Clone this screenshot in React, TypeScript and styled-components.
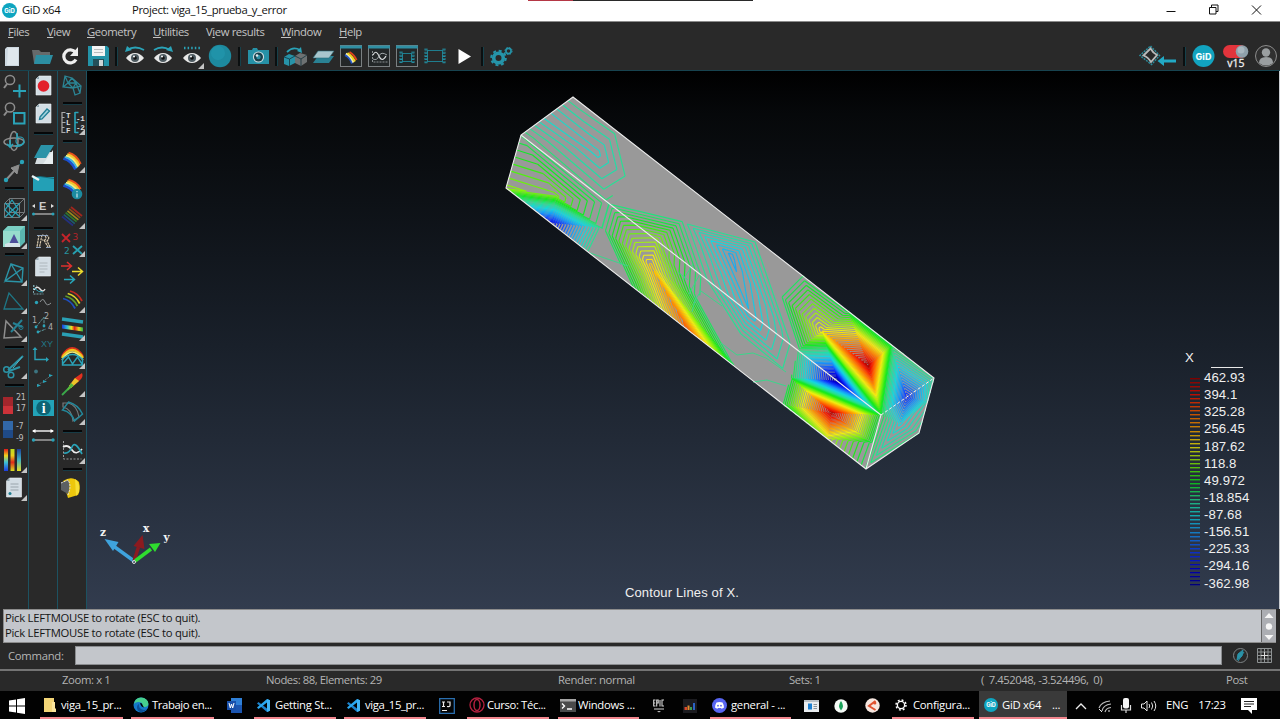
import React from "react";
import styled, { createGlobalStyle } from "styled-components";

const UI_FONT = '"Open Sans", "Noto Sans", sans-serif';
const TEAL = "#2aa3b8";
const GREY = "#8d8d8d";

const GlobalStyle = createGlobalStyle`
  body { margin: 0; background: #000; overflow: hidden; }
  * { box-sizing: border-box; }
  svg { display: block; flex: none; }
`;

/* ---------- layout ---------- */

const Desktop = styled.div`
  width: 1280px;
  height: 719px;
  display: flex;
  flex-direction: column;
  overflow: hidden;
  background: #292929;
  font-family: ${UI_FONT};
  font-size: 11.3px;
  line-height: 15px;
  letter-spacing: -0.28px;
`;

const TitleBar = styled.header`
  position: relative;
  height: 22px;
  flex: none;
  display: flex;
  align-items: center;
  background: #fff;
  color: #111;
  border-bottom: 1px solid #8b8b8b;
  padding-left: 2px;
  letter-spacing: -0.4px;
`;

const TopStrip = styled.i`
  position: absolute;
  top: 0;
  left: 528px;
  width: 225px;
  height: 1px;
  background: linear-gradient(90deg, #b53745 45px, #2a2a2a 45px);
`;

const Label = styled.span<{ $w?: number; $pl?: number; $ls?: number }>`
  white-space: pre;
  flex: none;
  margin-top: -2px;
  padding-left: ${(p) => p.$pl ?? 0}px;
  width: ${(p) => (p.$w ? p.$w + "px" : "auto")};
  letter-spacing: ${(p) => (p.$ls === undefined ? "inherit" : p.$ls + "px")};
`;

const WindowButtons = styled.div`
  margin-left: auto;
  display: flex;
  margin-right: 2px;
  margin-top: -3px;
`;

const MenuBar = styled.nav`
  height: 20px;
  flex: none;
  display: flex;
  align-items: center;
  padding-left: 8px;
  color: #c4c4c4;
  letter-spacing: -0.4px;
`;

const Toolbar = styled.div`
  height: 29px;
  flex: none;
  display: flex;
  border-bottom: 1px solid #17434f;
`;

const ToolSep = styled.i<{ $w: number }>`
  width: ${(p) => p.$w}px;
  display: flex;
  justify-content: center;
  align-items: center;
  &::before {
    content: "";
    width: 2px;
    height: 19px;
    background: #0b0f10;
    border-right: 1px solid #16414b;
  }
`;

const ToolGroupRight = styled.div`
  margin-left: auto;
  display: flex;
`;

const Workspace = styled.main`
  height: 538px;
  flex: none;
  display: flex;
`;

const ToolColumn = styled.div`
  width: 29px;
  flex: none;
  display: flex;
  flex-direction: column;
  border-right: 1px solid #1d5261;
`;

const ColumnSep = styled.i<{ $h: number }>`
  height: ${(p) => p.$h}px;
  display: flex;
  justify-content: center;
  align-items: center;
  &::before {
    content: "";
    width: 19px;
    height: 2px;
    background: #060708;
    border-bottom: 1px solid #173b45;
  }
`;

const Viewport = styled.section`
  position: relative;
  flex: 1;
  background: linear-gradient(#000 0%, #06080a 8%, #19202a 51%, #323c4e 100%);
  border-right: 1px solid #c9ccd0;
`;

const Legend = styled.div`
  position: absolute;
  left: 1098px;
  top: 278px;
  width: 90px;
  display: flex;
  flex-direction: column;
  color: #f0f0f0;
  font: 13.2px/17.12px "Liberation Sans", Arial, sans-serif;
  letter-spacing: 0.1px;
`;

const LegendHead = styled.div`
  display: flex;
  height: 20px;
  justify-content: space-between;
  align-items: flex-start;
  padding-right: 32px;
  &::after {
    content: "";
    width: 32px;
    height: 1px;
    background: #e8e8e8;
    margin-top: 18px;
  }
`;

const LegendBody = styled.div`
  display: flex;
  padding-left: 5px;
  gap: 4px;
`;

const LegendValues = styled.div`
  display: flex;
  flex-direction: column;
`;

const ResultCaption = styled.div`
  position: absolute;
  left: 0;
  right: 0;
  top: 513px;
  text-align: center;
  padding-right: 2px;
  color: #f0f0f0;
  font: 13px/17px "Liberation Sans", Arial, sans-serif;
  letter-spacing: 0.15px;
`;

const Messages = styled.div`
  height: 34px;
  flex: none;
  margin: 0 4px 0 3px;
  display: flex;
  background: #c3c6cb;
  border: 1px solid #8c8c8c;
  border-right: 0;
  color: #151515;
`;

const MessageText = styled.div`
  flex: 1;
  padding-left: 1px;
  display: flex;
  flex-direction: column;
`;

const MessageLine = styled.span`
  white-space: pre;
`;

const ScrollTrack = styled.div`
  width: 15px;
  background: #acaeb3;
  border-left: 1px solid #666;
`;

const CommandRow = styled.div`
  height: 26px;
  flex: none;
  display: flex;
  align-items: center;
  padding: 0 6px 0 8px;
  color: #b6b6b6;
`;

const CommandInput = styled.div`
  width: 1147px;
  height: 19px;
  background: #c3c6cb;
  border: 1px solid #8a8c8f;
  margin: -1px 9px 0 0;
`;

const StatusBar = styled.footer`
  height: 22px;
  flex: none;
  display: flex;
  align-items: center;
  border-top: 2px solid #747474;
  color: #b4b4b4;
  padding-left: 62px;
  padding-bottom: 1px;
  letter-spacing: -0.38px;
`;

const Taskbar = styled.div`
  height: 28px;
  flex: none;
  display: flex;
  background: #020202;
  color: #fff;
`;

const TaskSlot = styled.div<{ $w: number; $ml?: number }>`
  width: ${(p) => p.$w}px;
  margin-left: ${(p) => p.$ml ?? 0}px;
  display: flex;
  align-items: center;
  justify-content: center;
  padding-top: 1px;
`;

const Task = styled.div<{ $w: number; $ml?: number; $active?: boolean; $gap?: number }>`
  width: ${(p) => p.$w}px;
  margin-left: ${(p) => p.$ml ?? 8}px;
  display: flex;
  align-items: center;
  gap: ${(p) => p.$gap ?? 4}px;
  padding-left: ${(p) => (p.$active ? 5 : 2)}px;
  border-bottom: 2px solid #f2868e;
  padding-top: 2px;
  background: ${(p) => (p.$active ? "#3a3a3a" : "transparent")};
`;

/* ---------- icon helpers ---------- */

type IconProps = { w?: number; h?: number; corner?: boolean; children: React.ReactNode };

const Icon = ({ w = 28, h = 28, corner, children }: IconProps) => (
  <svg width={w} height={h} viewBox={`0 0 ${w} ${h}`} fill="none">
    {children}
    {corner && <path d="M27 21v6h-6z" fill="#c4c4c4" />}
  </svg>
);

const Sheet = ({ children, x = 7, y = 5 }: { children?: React.ReactNode; x?: number; y?: number }) => (
  <g transform={`translate(${x} ${y})`}>
    <path d="M3 0h12v19H0V3z" fill="#d3dde4" stroke="#eef3f6" strokeWidth=".6" />
    <path d="M0 3h3V0z" fill="#8fa3ae" />
    {children}
  </g>
);

const Eye = () => (
  <g>
    <path d="M5 16q4-5 9-5t9 5q-4 5-9 5t-9-5z" fill="#e8e8e8" />
    <circle cx="14" cy="16" r="4" fill="#4d5a60" />
    <circle cx="14" cy="16" r="1.8" fill="#111" />
    <circle cx="13" cy="14.6" r="1" fill="#fff" />
  </g>
);

const GidLogo = ({ size, font }: { size: number; font: number }) => (
  <svg width={size} height={size} viewBox={`0 0 ${size} ${size}`}>
    <circle cx={size / 2} cy={size / 2} r={size / 2} fill="#0ea5c0" />
    <text
      x={size / 2}
      y={size / 2 + font * 0.36}
      textAnchor="middle"
      fontFamily="Inter, sans-serif"
      fontWeight="800"
      fontSize={font}
      letterSpacing="0"
      fill="#f2fbfd"
    >
      GiD
    </text>
  </svg>
);

const FrameDots = ({ x, y, w, h }: { x: number; y: number; w: number; h: number }) => (
  <g>
    <rect x={x} y={y} width={w} height={h} stroke="#1f7d8e" />
    <path d={`M${x - 1.5} ${y - 2}v${h + 4}M${x + w + 1.5} ${y - 2}v${h + 4}`} strokeWidth="3" strokeDasharray="2 1.2" stroke="#2590a3" />
    <path d={`M${x - 1.5} ${y - 2}v${h + 4}M${x + w + 1.5} ${y - 2}v${h + 4}`} strokeWidth="1" stroke="#202b2e" strokeDasharray="1 2.2" />
  </g>
);

const WindowFrame = ({ children }: { children: React.ReactNode }) => (
  <g>
    <rect x="3.5" y="3.5" width="21" height="21" fill="#232728" stroke="#7b8082" />
    <path d="M3 5h22" stroke="#2f8fa3" strokeWidth="3" />
    {children}
  </g>
);

/* ---------- top toolbar ---------- */

const MainTools = () => (
  <Toolbar>
    <Icon w={27}>
      <path d="M7 5h12v19H5V7z" fill="#cdd8e0" />
      <path d="M8 6h10v17H7z" fill="#dfe7ec" />
    </Icon>
    <Icon>
      <path d="M5 8h7l2 2h9v11H7z" fill="#666a6b" />
      <path d="M9 13h17l-3 9H7z" fill="#2c8ea2" />
    </Icon>
    <Icon w={29}>
      <path d="M21 17.5a6.5 6.5 0 1 1-.5-7" stroke="#eee" strokeWidth="3.2" />
      <path d="M23 5v9h-8z" fill="#eee" />
    </Icon>
    <Icon>
      <path d="M4 4h19l2 2v18H4z" fill="#2493a8" />
      <path d="M8 4h13v10H8z" fill="#f4f4f4" />
      <path d="M10 7.500h9M10 10.500h9" stroke="#b9bdbe" />
      <path d="M9 17h11v7H9z" fill="#24505a" />
      <path d="M15 18h4v6h-4z" fill="#cfd4d6" />
    </Icon>
    <ToolSep $w={9} />
    <Icon>
      <Eye />
      <path d="M6 8q8-5 17 0" stroke={TEAL} strokeWidth="1.8" />
      <path d="M4 10l2-6 5 4z" fill={TEAL} />
    </Icon>
    <Icon>
      <Eye />
      <path d="M5 8q8-5 16 0" stroke={TEAL} strokeWidth="1.800" />
      <path d="M24 10l-2-6-5 4z" fill={TEAL} />
    </Icon>
    <Icon w={29} corner>
      <g transform="translate(1 0)">
        <Eye />
        <path d="M6 6h17" stroke={TEAL} strokeWidth="2.500" strokeDasharray="1.500 2.100" />
      </g>
    </Icon>
    <Icon>
      <circle cx="14" cy="14" r="11.200" fill="#1d8a9f" />
      <circle cx="12" cy="11" r="7" fill="#239ab0" opacity=".6" />
    </Icon>
    <ToolSep $w={10} />
    <Icon>
      <path d="M4 8h4l1-2h4l1 2h11v14H4z" fill="#2691a6" />
      <circle cx="14.500" cy="15" r="5.600" fill="#cfdde1" />
      <circle cx="14.500" cy="15" r="4.500" fill="#19414b" />
      <circle cx="14.500" cy="15" r="2.200" fill="#2f8fa3" />
      <circle cx="13" cy="13.500" r="1.300" fill="#dfe7ea" />
    </Icon>
    <ToolSep $w={9} />
    <Icon>
      <path d="M3 15l5-3 6 2v7l-6 3-5-2z" fill="#2793a8" />
      <path d="M14 14l5-3 7 2v7l-6 4-6-3z" fill="#6d7172" />
      <path d="M3 15l5.500 2 5.500-3M8.500 17v7M14 14l6 3 6-4M20 17v7" stroke="#14343c" strokeWidth=".8" />
      <path d="M6 10q6-6 13-2" stroke={TEAL} strokeWidth="1.800" />
      <path d="M21 11l-1-6-4 4z" fill={TEAL} />
    </Icon>
    <Icon>
      <path d="M9 14h16l-5 7H4z" fill="#2a8193" />
      <path d="M9 9h16l-5 7H4z" fill="#a9c6cd" stroke="#2b6d7a" strokeWidth=".6" />
    </Icon>
    <Icon>
      <WindowFrame>
        <g strokeWidth="2">
          <path d="M8 13q5 2 7 8.500" stroke="#2456c8" />
          <path d="M9 11.500q5 3 7.500 9" stroke="#f4efb0" />
          <path d="M10.500 11q5 3 7.500 8.500" stroke="#f2d51c" />
          <path d="M12.500 10q5 3 7 8" stroke="#e0431c" />
        </g>
      </WindowFrame>
    </Icon>
    <Icon>
      <WindowFrame>
        <path d="M7.500 9v11h15" stroke="#8b9092" strokeDasharray="2 1" />
        <path d="M8 13q3-6 6 1t7 0" stroke="#d9dcdd" strokeWidth="1.200" />
        <path d="M8 17q4 2 6-3t8-1" stroke="#9fa5a7" />
      </WindowFrame>
    </Icon>
    <Icon>
      <WindowFrame>
        <FrameDots x={9.5} y={11.5} w={9} h={8} />
      </WindowFrame>
    </Icon>
    <Icon w={29}>
      <FrameDots x={6.5} y={8.500} w={15} h={11} />
    </Icon>
    <Icon>
      <path d="M8.500 7l12.500 7.500L8.500 22z" fill="#fff" />
    </Icon>
    <ToolSep $w={9} />
    <Icon>
      <circle cx="11.500" cy="16" r="4.800" stroke="#2594a9" strokeWidth="3.600" />
      <circle cx="11.500" cy="16" r="7.300" stroke="#2594a9" strokeWidth="2" strokeDasharray="3 2.730" />
      <circle cx="21.500" cy="9" r="2.600" stroke="#2594a9" strokeWidth="1.600" />
      <circle cx="21.500" cy="9" r="3.600" stroke="#2594a9" strokeWidth="1" strokeDasharray="1.500 1.330" />
    </Icon>
    <ToolGroupRight>
      <Icon w={38}>
        <path d="M11.500 4l9 9.500-8 9-11.500-9z" stroke="#2b8b9c" strokeWidth="1.500" strokeDasharray="2 1" />
        <path d="M4.500 13.500l7-7q2.500 4.500 6.500 6.500l-6 7q-3-5-7.500-6.500z" stroke="#b9bbbb" strokeWidth="1.800" />
        <path d="M23 19h14" stroke="#22a9c4" strokeWidth="3" />
        <path d="M18.500 19l6.500-5v10z" fill="#22a9c4" />
      </Icon>
      <ToolSep $w={15} />
      <Icon w={23}>
        <circle cx="11.500" cy="14" r="11" fill="#12a3bf" />
        <text x="11.500" y="17.500" textAnchor="middle" fontFamily="Inter, sans-serif" fontWeight="800" fontSize="9" letterSpacing="0" fill="#eefbfd">GiD</text>
      </Icon>
      <Icon w={37}>
        <rect x="8" y="3" width="24" height="13" rx="6.500" fill="#e2343c" />
        <circle cx="27" cy="9.500" r="6.300" fill="#8fa0aa" />
        <circle cx="26" cy="8" r="3.500" fill="#a9b7bf" />
        <text x="21" y="25" textAnchor="middle" fontFamily="Open Sans, sans-serif" fontSize="10.500" letterSpacing="0" fill="#f0f0f0" stroke="#f0f0f0" strokeWidth=".3">v15</text>
      </Icon>
      <Icon>
        <circle cx="14" cy="14" r="10.500" fill="#303030" stroke="#8b8b8b" />
        <circle cx="14" cy="10.500" r="4.200" fill="#9a9ea0" />
        <path d="M7 21q0-6 7-6t7 6q-7 5-14 0z" fill="#9a9ea0" />
      </Icon>
    </ToolGroupRight>
  </Toolbar>
);

/* ---------- side columns ---------- */

const ColumnOne = () => (
  <ToolColumn>
    <Icon>
      <circle cx="10" cy="9" r="4.600" stroke={GREY} strokeWidth="1.500" />
      <path d="M7 13l-3 4" stroke={GREY} strokeWidth="2" />
      <path d="M19.500 13.500v13M13 20h13" stroke={TEAL} strokeWidth="2" />
    </Icon>
    <Icon>
      <circle cx="10" cy="8.500" r="4.600" stroke={GREY} strokeWidth="1.500" />
      <path d="M7 12.500l-3 4" stroke={GREY} strokeWidth="2" />
      <rect x="14" y="14" width="10.500" height="10.500" stroke={TEAL} strokeWidth="2" />
    </Icon>
    <Icon>
      <ellipse cx="14" cy="14" rx="4" ry="9.500" stroke={GREY} strokeWidth="1.500" />
      <ellipse cx="14" cy="15" rx="10" ry="4" stroke={GREY} strokeWidth="1.500" />
      <path d="M10 13v6M7 17l3 3 3-3M24 15q-2 5-9 4M17 11v-5" stroke={TEAL} strokeWidth="1.600" />
      <circle cx="20" cy="14" r="4" stroke={TEAL} strokeWidth="1.200" />
    </Icon>
    <Icon>
      <path d="M6 25l9-10" stroke={GREY} strokeWidth="2" />
      <path d="M19 10l-8 3 6 6z" fill={GREY} stroke={GREY} strokeWidth="1" />
      <path d="M19 10l3-3" stroke="#20616d" />
      <circle cx="6" cy="25" r="2.200" fill={TEAL} />
      <circle cx="22" cy="7" r="2.200" fill={TEAL} />
    </Icon>
    <ColumnSep $h={11} />
    <Icon corner>
      <path d="M9.500 4.500h15v14h-15zM4.500 9.500h15v14h-15zM4.500 9.500l5-5M19.500 9.500l5-5M4.500 23.500l5-5M19.500 23.500l5-5" stroke="#75797b" />
      <path d="M5 9l15 14M5 23l15-14M12 6l6 9-6 8-7-7z" stroke={TEAL} strokeWidth="1.200" />
    </Icon>
    <Icon corner>
      <path d="M3 9l5-5h17v16l-5 5H3z" fill="#5ab7b0" />
      <path d="M3 9h17v16H3z" fill="#97dccd" />
      <path d="M3 9l5-5h17l-5 5z" fill="#7bcfc3" />
      <path d="M5 22l9-3 6 3v3H5z" fill="#d5e3e8" />
      <path d="M14 12l4.500 9h-9z" fill="#4d4f9a" />
    </Icon>
    <ColumnSep $h={9} />
    <Icon corner>
      <path d="M11 5l12 4-1 14-17-1zM11 5l-6 17 18-13M11 5l11 18" stroke="#2b93a6" strokeWidth="1.400" />
    </Icon>
    <Icon corner>
      <path d="M9 6L4 22h19z" stroke="#1f7685" strokeWidth="1.300" />
    </Icon>
    <Icon corner>
      <path d="M6 6L4 23l17-1zM6 6l15 16" stroke={GREY} strokeWidth="1.500" />
      <path d="M11 17L22 5M22 12L13 8" stroke="#258194" strokeWidth="2" />
      <circle cx="21" cy="12.500" r="2" stroke="#258194" />
    </Icon>
    <ColumnSep $h={9} />
    <Icon corner>
      <path d="M23 4L8 18M20 15L9 19" stroke="#2b93a6" strokeWidth="2" />
      <path d="M22 5L13 16" stroke="#4fb5c6" />
      <circle cx="6.500" cy="17.500" r="2.800" stroke="#2b93a6" strokeWidth="1.500" />
      <circle cx="11" cy="23" r="2.800" stroke="#2b93a6" strokeWidth="1.500" />
    </Icon>
    <ColumnSep $h={10} />
    <Icon>
      <path d="M3 7h10v17H3z" fill="#a3262c" />
      <path d="M3 16h10v8H3z" fill="#cc3239" />
      <text x="16" y="9.500" fontSize="8" fill="#bcbcbc" fontFamily="DejaVu Sans">21</text>
      <text x="16" y="21" fontSize="8" fill="#bcbcbc" fontFamily="DejaVu Sans">17</text>
    </Icon>
    <Icon>
      <path d="M3 3h10v17H3z" fill="#1f4a87" />
      <path d="M3 3h10v9H3z" fill="#3268a8" />
      <text x="16" y="11" fontSize="8" fill="#bcbcbc" fontFamily="DejaVu Sans">-7</text>
      <text x="16" y="23" fontSize="8" fill="#bcbcbc" fontFamily="DejaVu Sans">-9</text>
    </Icon>
    <Icon corner>
      <defs>
        <linearGradient id="ra" x2="0" y2="1">
          <stop stopColor="#e0161a" /><stop offset=".3" stopColor="#f0d21c" /><stop offset=".6" stopColor="#3fc4d4" /><stop offset="1" stopColor="#1d3ae0" />
        </linearGradient>
        <linearGradient id="rb" x2="0" y2="1">
          <stop stopColor="#b9dc22" /><stop offset=".3" stopColor="#e8cf1d" /><stop offset=".6" stopColor="#e02a1a" /><stop offset="1" stopColor="#d8df20" />
        </linearGradient>
        <linearGradient id="rc" x2="0" y2="1">
          <stop stopColor="#1d3f9a" /><stop offset=".5" stopColor="#3fb4c4" /><stop offset="1" stopColor="#e8df20" />
        </linearGradient>
      </defs>
      <path d="M4 3h4v22H4z" fill="url(#ra)" />
      <path d="M10.500 3h4v22h-4z" fill="url(#rb)" />
      <path d="M17 3h4v22h-4z" fill="url(#rc)" />
    </Icon>
    <Icon corner>
      <Sheet x={6.500} y={4}>
        <path d="M4 6h8M4 9h8M4 12h8" stroke="#9aa5ac" />
        <circle cx="3.500" cy="15.500" r="1.500" fill="#1f7d90" />
      </Sheet>
    </Icon>
  </ToolColumn>
);

const ColumnTwo = () => (
  <ToolColumn>
    <Icon>
      <Sheet><circle cx="7.500" cy="10" r="5.800" fill="#e3202b" /></Sheet>
    </Icon>
    <Icon>
      <Sheet>
        <path d="M4 13L11 5l2.500 2L6 15l-2.500.5z" fill="#9fd0dc" stroke="#1f7d95" strokeWidth="1.300" />
      </Sheet>
    </Icon>
    <ColumnSep $h={13} />
    <Icon>
      <path d="M10 12h14v12H6z" fill="#d5dde0" />
      <path d="M12 5h13l-8 13H5z" fill="#2b93a8" />
      <path d="M24 10v14H14z" fill="#e8eef0" />
    </Icon>
    <Icon>
      <path d="M4 9h21v14H4z" fill="#23a0b6" />
      <path d="M4 9h7l14 2v-1L11 8z" fill="#176b7b" />
      <path d="M3 8l7 4" stroke="#e9f3f5" strokeWidth="2.500" />
    </Icon>
    <Icon>
      <text x="13.500" y="14" textAnchor="middle" fontSize="11" fontWeight="700" fill="#ccc" fontFamily="Liberation Sans">E</text>
      <path d="M3 10l3-2v4zM25 10l-3-2v4z" fill="#ddd" />
      <path d="M4 18h21" stroke={GREY} strokeWidth="1.800" />
      <circle cx="4.500" cy="18" r="1.500" fill={TEAL} />
      <circle cx="24" cy="18" r="1.500" fill={TEAL} />
    </Icon>
    <ColumnSep $h={8} />
    <Icon h={21}>
      <path d="M10 3l-2 12M13 3l-2.500 12M13 3q6 1 3 5h-3M15 8l4 7M17 3q5 2 1 6l3 6" stroke="#d8c9ae" strokeWidth="1.200" strokeDasharray="2.500 .6" />
      <path d="M8 3.500h11M7 15.500h5M17 15.500h5" stroke="#8fa3bd" />
    </Icon>
    <Icon>
      <Sheet x={6.500} y={4}>
        <path d="M4 6h8M4 9h8M4 12h8M4 15h5" stroke="#aeb7bc" />
      </Sheet>
    </Icon>
    <Icon>
      <path d="M4.500 4v9h10M4 5h4" stroke="#7aa4ad" strokeDasharray="2 1" />
      <path d="M5 9q3-5 6-1t5 0" stroke="#e0e0e0" strokeWidth="1.400" />
      <path d="M5 7q5 5 9 4" stroke={TEAL} />
      <circle cx="7.500" cy="21.500" r="1.700" fill={TEAL} />
      <path d="M11 21q3-5 5 0t6 1" stroke="#8f9496" />
    </Icon>
    <Icon>
      <text x="3" y="14" fontSize="8" fill="#a9adaf" fontFamily="DejaVu Sans">1</text>
      <text x="15" y="9.500" fontSize="8" fill="#a9adaf" fontFamily="DejaVu Sans">2</text>
      <text x="19" y="21" fontSize="8" fill="#a9adaf" fontFamily="DejaVu Sans">4</text>
      <path d="M7 18l8-10v9M9 23l8-3" stroke="#5f999f" strokeDasharray="3 1" />
      <circle cx="7" cy="18" r="1.400" fill={TEAL} />
      <circle cx="15" cy="17" r="1.400" fill={TEAL} />
      <circle cx="9" cy="23" r="1.400" fill={TEAL} />
    </Icon>
    <Icon>
      <text x="12" y="10" fontSize="9" fill="#217787" letterSpacing="0" fontFamily="Liberation Sans">XY</text>
      <path d="M6 12v10.500h11" stroke={TEAL} strokeWidth="1.400" />
      <path d="M17 20l3 2.500-3 2.500z" fill={TEAL} />
      <path d="M3.500 13l2.500-3 2.500 3z" fill={TEAL} />
    </Icon>
    <Icon>
      <circle cx="7" cy="6.500" r="1.900" fill="#3c7480" />
      <path d="M8 20l6-3M16 15l7-5" stroke="#5e686b" strokeDasharray="2 1" />
      <path d="M8 19l4 1.500-4 1.500zM14 15l4 1.500-4 1.500zM20 9l4 1.500-4 1.500z" fill={TEAL} />
    </Icon>
    <Icon h={29}>
      <path d="M4 7h21v16H4z" fill="#23a3b8" />
      <circle cx="14.500" cy="15" r="7.300" fill="#0d6475" />
      <text x="14.500" y="20" textAnchor="middle" fontSize="14" fontWeight="700" fill="#fff" fontFamily="Liberation Serif">i</text>
    </Icon>
    <Icon>
      <path d="M4 9h20" stroke="#eee" strokeWidth="1.500" />
      <path d="M3 9l3.500-2v4zM25 9l-3.500-2v4z" fill="#fff" />
      <path d="M4 18h21" stroke={GREY} strokeWidth="1.800" />
      <circle cx="4.500" cy="18" r="1.700" fill={TEAL} />
      <circle cx="24" cy="18" r="1.700" fill={TEAL} />
    </Icon>
  </ToolColumn>
);

const Arcs = ({ colors, d, w = 1.6, dx = -1.5, dy = 1.7 }: { colors: string[]; d: string; w?: number; dx?: number; dy?: number }) => (
  <g>
    {colors.map((c, i) => (
      <path key={c} d={d} stroke={c} strokeWidth={w} transform={`translate(${i * dx} ${i * dy})`} />
    ))}
  </g>
);

const RAINBOW = ["#e8501c", "#f5c82a", "#f4ee80", "#3fb6e0", "#1b4fd0"];

const ColumnThree = () => (
  <ToolColumn>
    <Icon>
      <path d="M7 5l7 2 4 5-3 5-10-1zM7 5l3 7-5 4M10 12l5 5M10 12l4-5M10 12l8 0M14 7l9 8-1 7-5 2-2-7M15 17l8-2M18 12l4 10" stroke="#2b8494" strokeWidth="1.300" />
    </Icon>
    <ColumnSep $h={9} />
    <Icon corner>
      <path d="M4 4v21M4 4.500h3.500M4 9.500h2.500M4 14.500h3.500M4 19.500h2.500M4 24.500h3.500" stroke="#aaa" strokeWidth="1.200" />
      <g fontSize="7.500" fontWeight="700" fill="#ddd" fontFamily="Liberation Mono">
        <text x="8" y="9.500">T</text><text x="8" y="17">L</text><text x="8" y="25">F</text>
        <text x="18" y="13">-1</text><text x="18" y="22">-2</text>
      </g>
      <path d="M17 4v21M17 4.500h3.500M17 14.500h3M17 24.500h3.500" stroke={TEAL} strokeWidth="1.600" />
    </Icon>
    <ColumnSep $h={10} />
    <Icon corner>
      <Arcs colors={RAINBOW} d="M10.500 7q8 2 12 11" w={2.400} dx={-1.300} dy={1.400} />
    </Icon>
    <Icon>
      <Arcs colors={RAINBOW} d="M10.500 6q8 2 12 9" w={2.400} dx={-1.300} dy={1.400} />
      <circle cx="19" cy="20" r="5.300" fill="#1c8ba0" />
      <path d="M19 17v1.200M19 19.500v4" stroke="#8fc7d2" strokeWidth="1.800" />
    </Icon>
    <Icon corner>
      <Arcs colors={["#a1261e", "#8d4a18", "#9a8a1c", "#2f7a2a", "#1d5a6e", "#23307e"]} d="M13 5l11 9" w={1.700} dx={-1.800} dy={1.900} />
    </Icon>
    <Icon corner>
      <path d="M4 4l8 8M12 4l-8 8" stroke="#c6242b" strokeWidth="1.800" />
      <text x="14.500" y="9.500" fontSize="9" fill="#b3242a" fontFamily="DejaVu Sans">3</text>
      <text x="6" y="24" fontSize="9" fill="#27939f" fontFamily="DejaVu Sans">2</text>
      <path d="M15 16l9 8M24 16l-9 8" stroke="#27a0b0" strokeWidth="1.800" />
    </Icon>
    <Icon>
      <path d="M3 8h10M9 4l4.500 4L9 12" stroke="#e0302e" strokeWidth="1.500" />
      <path d="M14 13.500h10M20 9.500l4.500 4-4.500 4" stroke="#eddc2e" strokeWidth="1.500" />
      <path d="M6 21.500h10M12 17.500l4.500 4-4.500 4" stroke="#27a7bb" strokeWidth="1.500" />
    </Icon>
    <Icon corner>
      <Arcs colors={["#c22a22", "#e0d32a", "#5f9e2a", "#1f4fc0"]} d="M12 5q8 2 12 10" w={1.800} dx={-2.300} dy={2.500} />
    </Icon>
    <Icon corner>
      <defs>
        <linearGradient id="tube">
          <stop stopColor="#1d3ae0" /><stop offset=".25" stopColor="#2ec4d4" /><stop offset=".45" stopColor="#e6e61e" /><stop offset=".6" stopColor="#e0201a" /><stop offset=".8" stopColor="#e6d61e" /><stop offset="1" stopColor="#27b34a" />
        </linearGradient>
      </defs>
      <path d="M4 5l21 3" stroke="#2aa0b4" strokeWidth="3.500" />
      <path d="M4 10.500l21 3v4l-21-3z" fill="url(#tube)" />
      <path d="M4 20l21 3" stroke="#2aa0b4" strokeWidth="3.500" />
    </Icon>
    <Icon corner>
      <path d="M4 14q10-16 21 0" stroke="#d8301c" strokeWidth="2" />
      <path d="M4 16q10-16 21 0" stroke="#f0c31c" strokeWidth="2.500" />
      <path d="M4 18q10-16 21 0" stroke="#efe97c" strokeWidth="1.500" />
      <path d="M4.500 23v-6q10-9 20 0v6zM4.500 22l6-7 4 7 5-7 4.500 7" stroke="#2aa3b8" strokeWidth="1.400" />
    </Icon>
    <Icon corner>
      <path d="M4 25l9-9" stroke="#3aa84a" strokeWidth="1.800" />
      <path d="M24 3q2 4-3 8l-8 7-2-2 6-8z" fill="#e2301f" />
      <path d="M17 8l4 3-8 7-2-2z" fill="#ecc42a" />
      <path d="M13 13l3 2.500-6 5-1-1z" fill="#58b83a" />
    </Icon>
    <Icon corner>
      <path d="M5 5l5 0q9 2 11 14l-6 4q-1-12-10-14z" stroke="#777b7d" strokeWidth="1.200" />
      <path d="M4.500 12l6-8q10 3 14 12l-8 7q-3-9-12-11z" stroke="#23889b" strokeWidth="1.500" />
    </Icon>
    <ColumnSep $h={11} />
    <Icon corner>
      <path d="M5.500 4v18h18" stroke="#9a9d9e" strokeDasharray="2 1.500" />
      <path d="M5 10q5-3 9 3t10-1" stroke="#ececec" strokeWidth="1.700" />
      <path d="M6 16q5 1 8-6t10 7" stroke="#2aa3b8" strokeWidth="1.700" />
    </Icon>
    <ColumnSep $h={9} />
    <Icon>
      <path d="M5 7q9-6 16 1 2 8-1 13l-10 3z" fill="#edc70c" />
      <path d="M17 5q5 3 4 13l-3 4z" fill="#f7df35" />
      <path d="M3 9l7-3q3 5 0 14l-7-4z" fill="#5c6063" />
      <path d="M3 9l7-3q4 6 0 15" stroke="#ddd" strokeDasharray="2 1" />
    </Icon>
  </ToolColumn>
);

/* ---------- contour field ---------- */

type Stop = [number, number, number, number];
const MIN = -362.98;
const MAX = 462.93;
const LEVELS = 52;

const RAMP: Stop[] = [
  [-363, 0, 0, 150], [-294, 0, 0, 220], [-225, 15, 60, 255], [-156, 25, 150, 250],
  [-87, 20, 215, 225], [-18, 40, 225, 145], [50, 15, 235, 25], [119, 130, 245, 10],
  [188, 245, 240, 15], [256, 255, 165, 0], [325, 255, 90, 0], [394, 240, 15, 0], [463, 150, 0, 0],
];

const colorAt = (v: number, dim = 1): string => {
  let i = 0;
  while (i < RAMP.length - 2 && v > RAMP[i + 1][0]) i++;
  const a = RAMP[i];
  const b = RAMP[i + 1];
  const t = Math.max(0, Math.min(1, (v - a[0]) / (b[0] - a[0])));
  const mix = [1, 2, 3].map((k) => Math.round((a[k] + (b[k] - a[k]) * t) * dim));
  return `rgb(${mix.join(",")})`;
};

type Node = [number, number, number];
const N: Record<string, Node> = {
  A: [573, 97, -8], B: [521, 135, 8], C: [506, 188, 128], D: [866, 469, 8],
  E: [919, 433, -5], F: [934, 378, -14], G: [881, 415, 28],
  m: [547, 116, -80], p: [597, 153, -76], t1: [617, 131, -14], q: [631, 181, -10], b1: [606, 201, -4],
  n: [556, 196, 112], k: [552, 223, -280], w: [602, 228, -6], l: [590, 253, -6], u: [609, 204, -6],
  v: [683, 221, -10], h: [656, 240, 130], s0: [703, 277, -12], c: [651, 266, 225], y: [632, 286, 20],
  o: [688, 330, 325], z: [736, 367, -4], s: [699, 300, -4],
  v2: [757, 241, -12], x1: [731, 255, -140], x2: [750, 313, -115], g1: [794, 347, -12], j: [740, 336, -12], f: [786, 374, -12],
  t2: [803, 276, 10], g2: [782, 297, 10], pk: [822, 331, 200], g3: [798, 350, -2], t3: [848, 311, 20],
  r1: [868, 365, 455], n1: [892, 345, 20], k2: [838, 381, -363], gf: [907, 397, -250],
  n5: [791, 378, 30], r2: [832, 413, 445], cl: [782, 404, 15], b2: [828, 439, 150], gd: [873, 443, 15],
  e1: [900, 424, -90], ef: [928, 401, -50],
};

const MESH = [
  "A m p", "A p t1", "t1 p q", "q p b1", "B m p", "B p b1",
  "B C n", "B n u", "n u w", "C n k", "n w k", "k w l",
  "u h c", "u w c", "w c y", "y c o", "c o z", "h c s", "c s z", "h s0 s",
  "u v h", "v h s0",
  "v v2 x1", "v x1 x2", "v x2 s0", "v2 x1 g1", "x1 x2 g1", "s0 x2 j", "j x2 f", "x2 f g1",
  "t2 g2 pk", "g2 pk g3", "t2 pk t3", "pk g3 k2", "pk k2 G", "pk r1 G", "pk t3 r1", "t3 r1 n1", "r1 n1 G",
  "n1 G gf", "n1 gf F",
  "g3 k2 n5", "n5 k2 G", "n5 G r2", "n5 r2 cl", "cl r2 b2", "r2 b2 gd", "r2 G gd", "b2 gd D",
  "G gf e1", "gf e1 ef", "gf F ef", "G e1 D", "D e1 E", "E e1 ef",
].map((row) => row.split(" ").map((id) => N[id]));

const isoline = (level: number): string => {
  const parts: string[] = [];
  MESH.forEach((tri) => {
    const hits: string[] = [];
    for (let i = 0; i < 3; i++) {
      const a = tri[i];
      const b = tri[(i + 1) % 3];
      if (a[2] < level !== b[2] < level) {
        const t = (level - a[2]) / (b[2] - a[2]);
        hits.push(`${(a[0] + (b[0] - a[0]) * t).toFixed(1)} ${(a[1] + (b[1] - a[1]) * t).toFixed(1)}`);
      }
    }
    if (hits.length === 2) parts.push(`M${hits[0]}L${hits[1]}`);
  });
  return parts.join("");
};

const LEVEL_VALUES = Array.from({ length: LEVELS }, (_, i) => MIN + ((i + 0.5) * (MAX - MIN)) / LEVELS);

const Scene = () => (
  <svg width="1192" height="538" viewBox="87 71 1192 538" fill="none">
    <path d="M573 97L934 378 919 433 866 469 506 188 521 135z" fill="#999" />
    <g strokeWidth="1.150">
      {LEVEL_VALUES.map((v) => (
        <path key={v} d={isoline(v)} stroke={colorAt(v)} />
      ))}
      <g stroke="#3bd68b" strokeWidth="1">
        <path d="M721 343l16 12 16-2 13 5 20 14M753 382l14-2 19 6M692 312l3-12 6-9 21 15M590 253l38 13" />
        <path d="M688 280l-10-8M700 274l-11 20M693 264l-10 16" />
      </g>
      <path d="M573 97L934 378 919 433 866 469 506 188 521 135zM521 135L881 415 866 469" stroke="#ececec" strokeWidth="1.100" />
      <path d="M881 415l53-37" stroke="#f2f2f2" strokeWidth="1" strokeDasharray="3 2" />
    </g>
    <g>
      <path d="M134 561l-22-16" stroke="#3fa3dd" strokeWidth="3.500" />
      <path d="M104.500 539l14 3-5.500 9z" fill="#3fa3dd" />
      <path d="M134 561l4.500-14" stroke="#8c1a1f" strokeWidth="3.500" />
      <path d="M142.500 535l2 14-11-3z" fill="#8c1a1f" />
      <path d="M135 561l16-12" stroke="#2fdc2f" strokeWidth="3.500" />
      <path d="M160.500 543l-11.500 1 6 8z" fill="#2fdc2f" />
      <circle cx="134" cy="562" r="1.500" stroke="#ddd" />
      <g fill="#f4f4f4" fontFamily="DejaVu Serif" fontWeight="700" fontSize="10.500">
        <text x="100" y="536">z</text>
        <text x="143" y="532">x</text>
        <text x="163.500" y="541">y</text>
      </g>
    </g>
  </svg>
);

const LEGEND_TEXT = [
  "462.93", "394.1", "325.28", "256.45", "187.62", "118.8", "49.972",
  "-18.854", "-87.68", "-156.51", "-225.33", "-294.16", "-362.98",
];

/* ---------- taskbar icons ---------- */

const FolderIcon = () => (
  <svg width="14" height="16" viewBox="0 0 14 16"><path d="M2 1h10v14H2z" fill="#f3d577" /><path d="M10 5h3v6l1 1v3h-4z" fill="#fbe59c" /></svg>
);
const EdgeIcon = () => (
  <svg width="16" height="16" viewBox="0 0 16 16">
    <circle cx="8" cy="8" r="7.500" fill="#1579c9" />
    <path d="M1 7Q2 .5 8 .5q7 .5 7.500 6.500-.5 3-4 3-3 0-2-2 0-3-4-3-3 0-4.500 2z" fill="#46cf8e" />
    <path d="M6 7q-1 5 5 6 2 0 3-1-3 4-7 3-3-1-3-5 0-2 2-3z" fill="#0b4f96" />
    <path d="M9.500 8q0-2-2.500-2 1 4 4 4.500z" fill="#020202" />
  </svg>
);
const CodeIcon = () => (
  <svg width="15" height="15" viewBox="0 0 15 15">
    <path d="M11 1l3 1.300v10.400L11 14 1 5.500 2.500 4 11 10.500z" fill="#1c82cc" />
    <path d="M11 1v3.500L2.500 11 1 9.500 11 1z" fill="#2aa6ee" />
    <path d="M11 1l3 1.300v10.400L11 14z" fill="#3fb3f3" />
  </svg>
);
const OperaIcon = () => (
  <svg width="16" height="16" viewBox="0 0 16 16" fill="none" stroke="#b3203f">
    <circle cx="8" cy="8" r="7" strokeWidth="1.300" /><ellipse cx="8" cy="8" rx="3" ry="5.500" strokeWidth="1.500" />
  </svg>
);
const TerminalIcon = () => (
  <svg width="16" height="13" viewBox="0 0 16 13" fill="none">
    <path d="M0 0h16v13H0z" fill="#4a4a4a" /><path d="M0 0h16v2.500H0z" fill="#a5a5a5" />
    <path d="M2 4.500L4.500 7 2 9.500M7 10h5" stroke="#fff" strokeWidth="1.400" />
  </svg>
);
const DiscordIcon = () => (
  <svg width="15" height="15" viewBox="0 0 15 15">
    <circle cx="7.500" cy="7.500" r="7.500" fill="#5865f2" />
    <path d="M4.500 4.500q3-1 6 0 1.500 2.500 1.500 5-1 1-2.500 1.200L9 10H6l-.5.700Q4 10.500 3 9.500q0-2.500 1.500-5z" fill="#fff" />
    <circle cx="6" cy="7.700" r=".9" fill="#5865f2" /><circle cx="9" cy="7.700" r=".9" fill="#5865f2" />
  </svg>
);
const GearIcon = () => (
  <svg width="14" height="14" viewBox="0 0 14 14" fill="none" stroke="#fff">
    <circle cx="7" cy="7" r="3.600" strokeWidth="1.300" /><circle cx="7" cy="7" r="5" strokeWidth="1.500" strokeDasharray="1.900 2.030" />
  </svg>
);

const Menu = ({ w, pre = "", hot, rest }: { w: number; pre?: string; hot: string; rest: string }) => (
  <Label $w={w}>{pre}<u>{hot}</u>{rest}</Label>
);

/* ---------- app ---------- */

export default function App() {
  return (
    <Desktop>
      <GlobalStyle />
      <TitleBar>
        <TopStrip />
        <GidLogo size={15} font={6} />
        <Label $w={115} $pl={5}>GiD x64</Label>
        <Label>Project: viga_15_prueba_y_error</Label>
        <WindowButtons>
          <svg width="43" height="20" viewBox="0 0 43 20"><path d="M1.500 12.500h9" stroke="#111" /></svg>
          <svg width="43" height="20" viewBox="0 0 43 20" fill="none" stroke="#111">
            <path d="M1.500 8.500h6.500v6.500h-6.500zM3.500 8v-2h6.500v6.500h-2" />
          </svg>
          <svg width="27" height="20" viewBox="0 0 27 20" stroke="#111"><path d="M1 6.500l9 9M10 6.500l-9 9" /></svg>
        </WindowButtons>
      </TitleBar>
      <MenuBar>
        <Menu w={39} hot="F" rest="iles" />
        <Menu w={40} hot="V" rest="iew" />
        <Menu w={66} hot="G" rest="eometry" />
        <Menu w={53} hot="U" rest="tilities" />
        <Menu w={75} pre="V" hot="i" rest="ew results" />
        <Menu w={58} hot="W" rest="indow" />
        <Menu w={30} hot="H" rest="elp" />
      </MenuBar>
      <MainTools />
      <Workspace>
        <ColumnOne />
        <ColumnTwo />
        <ColumnThree />
        <Viewport>
          <Scene />
          <ResultCaption>Contour Lines of X.</ResultCaption>
          <Legend>
            <LegendHead>X</LegendHead>
            <LegendBody>
              <svg width="10" height="222" viewBox="0 0 10 222" shapeRendering="crispEdges">
                {LEVEL_VALUES.map((v, i) => {
                  const y = Math.round(9 + (LEVELS - 1 - i) * 4.04);
                  return (
                    <g key={v}>
                      <path d={`M0 ${y}h10v2H0z`} fill={colorAt(v)} opacity=".3" />
                      <path d={`M0 ${y}h10v1H0z`} fill={colorAt(v, 0.78)} />
                    </g>
                  );
                })}
              </svg>
              <LegendValues>
                {LEGEND_TEXT.map((t) => <span key={t}>{t}</span>)}
              </LegendValues>
            </LegendBody>
          </Legend>
        </Viewport>
      </Workspace>
      <Messages>
        <MessageText>
          <MessageLine>Pick LEFTMOUSE to rotate (ESC to quit).</MessageLine>
          <MessageLine>Pick LEFTMOUSE to rotate (ESC to quit).</MessageLine>
        </MessageText>
        <ScrollTrack>
          <svg width="14" height="32" viewBox="0 0 14 32" fill="#f6f6f6">
            <path d="M7 3l4.500 5h-9zM7 30l4.500-5h-9z" /><circle cx="7" cy="16.500" r="3.200" />
          </svg>
        </ScrollTrack>
      </Messages>
      <CommandRow>
        <Label $w={67}>Command:</Label>
        <CommandInput />
        <svg width="20" height="18" viewBox="0 0 20 18" fill="none">
          <circle cx="9.500" cy="8.500" r="7" stroke="#7e8486" /><path d="M6 13l1-6 5-4-1 6zM7 14l6-9" fill="#2a93a8" stroke="#2a93a8" />
        </svg>
        <svg width="22" height="18" viewBox="0 0 22 18" stroke="#8e9293" fill="none">
          <path d="M6.500 1.500h14v14h-14zM10 1v15M13.500 1v15M17 1v15M6 5h15M6 8.500h15M6 12h15" />
          <path d="M13.500 5v7M10 8.500h7" stroke="#ddd" />
        </svg>
      </CommandRow>
      <StatusBar>
        <Label $w={204}>Zoom: x 1</Label>
        <Label $w={292} $ls={-0.45}>Nodes: 88, Elements: 29</Label>
        <Label $w={231}>Render: normal</Label>
        <Label $w={192}>Sets: 1</Label>
        <Label $w={245} $ls={-0.46}>(  7.452048, -3.524496,  0)</Label>
        <Label>Post</Label>
      </StatusBar>
      <Taskbar>
        <TaskSlot $w={34}>
          <svg width="16" height="16" viewBox="0 0 16 16" fill="#fff"><path d="M0 2.500l7-1v6H0zM8 1.300L16 0v7.500H8zM0 8.500h7v6l-7-1zM8 8.500h8V16l-8-1.300z" /></svg>
        </TaskSlot>
        <Task $w={83} $ml={6} $gap={5}><FolderIcon /><Label>viga_15_pr...</Label></Task>
        <Task $w={83} $gap={3}><EdgeIcon /><Label $ls={-0.4}>Trabajo en...</Label></Task>
        <TaskSlot $w={40}>
          <svg width="15" height="15" viewBox="0 0 15 15">
            <path d="M4 0h11v15H4z" fill="#2f7fd6" /><path d="M4 7h11v8H4z" fill="#1b55b0" /><path d="M0 3h9v9H0z" fill="#1850ab" />
            <path d="M2 5l1.300 5 1.200-4 1.200 4L7 5" stroke="#fff" fill="none" />
          </svg>
        </TaskSlot>
        <Task $w={82} $ml={0}><CodeIcon /><Label>Getting St...</Label></Task>
        <Task $w={82}><CodeIcon /><Label $ls={-0.4}>viga_15_pr...</Label></Task>
        <TaskSlot $w={41}>
          <svg width="16" height="16" viewBox="0 0 16 16" fill="none">
            <path d="M.7.7h14.600v14.600H.7z" stroke="#2a6fb0" strokeWidth="1.300" fill="#050505" />
            <path d="M3 4h3M4.500 4v4.500M3 8.500h3M8 4h3v3.500q0 1.500-3 1M3 12.500h5" stroke="#eee" strokeWidth="1.200" />
          </svg>
        </TaskSlot>
        <Task $w={82} $ml={0} $gap={2}><OperaIcon /><Label $ls={-0.38}>Curso: Téc...</Label></Task>
        <Task $w={81} $ml={9} $gap={2}><TerminalIcon /><Label>Windows ...</Label></Task>
        <TaskSlot $w={30} $ml={5}>
          <svg width="12" height="14" viewBox="0 0 12 14" fill="none">
            <path d="M2.500 1H.7v6h1.800M.7 4h1.500M3.700 7.500V1h1.500v3H3.700M7 1v6.500M11 1H9v6h2M1 10h10" stroke="#d5d5d5" strokeWidth="1.100" />
            <path d="M4 12h4l-2 1.500z" fill="#bbb" />
          </svg>
        </TaskSlot>
        <TaskSlot $w={30} $ml={1}>
          <svg width="14" height="14" viewBox="0 0 14 14">
            <path d="M0 0h14v14H0z" fill="#1b1b1f" /><path d="M1.500 8h2.500v3H1.500z" fill="#d9472b" /><path d="M4.500 6.500h2v4.500h-2z" fill="#e08a2e" />
            <path d="M7 8h2v3H7z" fill="#3c9a4e" /><path d="M10 4h2v7h-2z" fill="#2b62c4" />
          </svg>
        </TaskSlot>
        <Task $w={81} $ml={5}><DiscordIcon /><Label>general - ...</Label></Task>
        <TaskSlot $w={30} $ml={5}>
          <svg width="15" height="12" viewBox="0 0 15 12">
            <path d="M0 0h15v12H0z" fill="#e9edf0" /><path d="M0 0h15v2H0z" fill="#b8c0c6" /><path d="M4 3.500h4v6H4z" fill="#1c7fd0" />
            <path d="M9.500 4.500H13M9.500 6.500H13M9.500 8.500H13" stroke="#8a949b" />
          </svg>
        </TaskSlot>
        <TaskSlot $w={30}>
          <svg width="14" height="14" viewBox="0 0 14 14"><circle cx="7" cy="7" r="6.700" fill="#f5faf6" /><path d="M7 2q4 5 0 9.500Q3 7 7 2z" fill="#1ba35a" /></svg>
        </TaskSlot>
        <TaskSlot $w={30} $ml={1}>
          <svg width="15" height="15" viewBox="0 0 15 15" fill="none">
            <circle cx="7.500" cy="7.500" r="7.200" fill="#f6e6df" /><path d="M10.500 3L4 8l6.500 4" stroke="#e0522f" strokeWidth="2" /><circle cx="9.800" cy="5" r="1.600" fill="#e0522f" />
          </svg>
        </TaskSlot>
        <Task $w={82} $ml={5} $gap={5}><GearIcon /><Label>Configura...</Label></Task>
        <Task $w={88} $ml={5} $active><GidLogo size={14} font={5.5} /><Label $w={46}>GiD x64</Label><Label>...</Label></Task>
        <TaskSlot $w={28}>
          <svg width="12" height="8" viewBox="0 0 12 8" fill="none"><path d="M1 7l5-5 5 5" stroke="#eee" strokeWidth="1.300" /></svg>
        </TaskSlot>
        <TaskSlot $w={20}>
          <svg width="14" height="14" viewBox="0 0 14 14" fill="none" stroke="#bbb">
            <path d="M1 9Q3 3 12 2M4 12Q5 6 13 5M7 13Q8 9 13 8.500" strokeWidth="1.200" /><path d="M1 10l3 3M10 12h2" stroke="#eee" />
          </svg>
        </TaskSlot>
        <TaskSlot $w={21}>
          <svg width="12" height="16" viewBox="0 0 12 16" fill="none">
            <rect x="3" y="0" width="6" height="10.500" rx="2" fill="#f5f5f5" /><path d="M1.500 7v5h9V7M6 12v3" stroke="#ddd" strokeWidth="1.200" />
          </svg>
        </TaskSlot>
        <TaskSlot $w={26}>
          <svg width="16" height="14" viewBox="0 0 16 14" fill="none" stroke="#e5e5e5">
            <path d="M.5 5h2.500l3-3v10l-3-3H.5zM8 5q1.500 2 0 4M10.500 3.500q2.500 3.500 0 7M13 2q3.500 5 0 10" />
          </svg>
        </TaskSlot>
        <TaskSlot $w={30}><Label>ENG</Label></TaskSlot>
        <TaskSlot $w={40}><Label>17:23</Label></TaskSlot>
        <TaskSlot $w={33} $ml={0}>
          <svg width="16" height="16" viewBox="0 0 16 16"><path d="M0 0h16v12h-5v4l-4-4H0z" fill="#fff" /><path d="M3 3.500h10M3 6h10M3 8.500h7" stroke="#222" /></svg>
        </TaskSlot>
      </Taskbar>
    </Desktop>
  );
}
